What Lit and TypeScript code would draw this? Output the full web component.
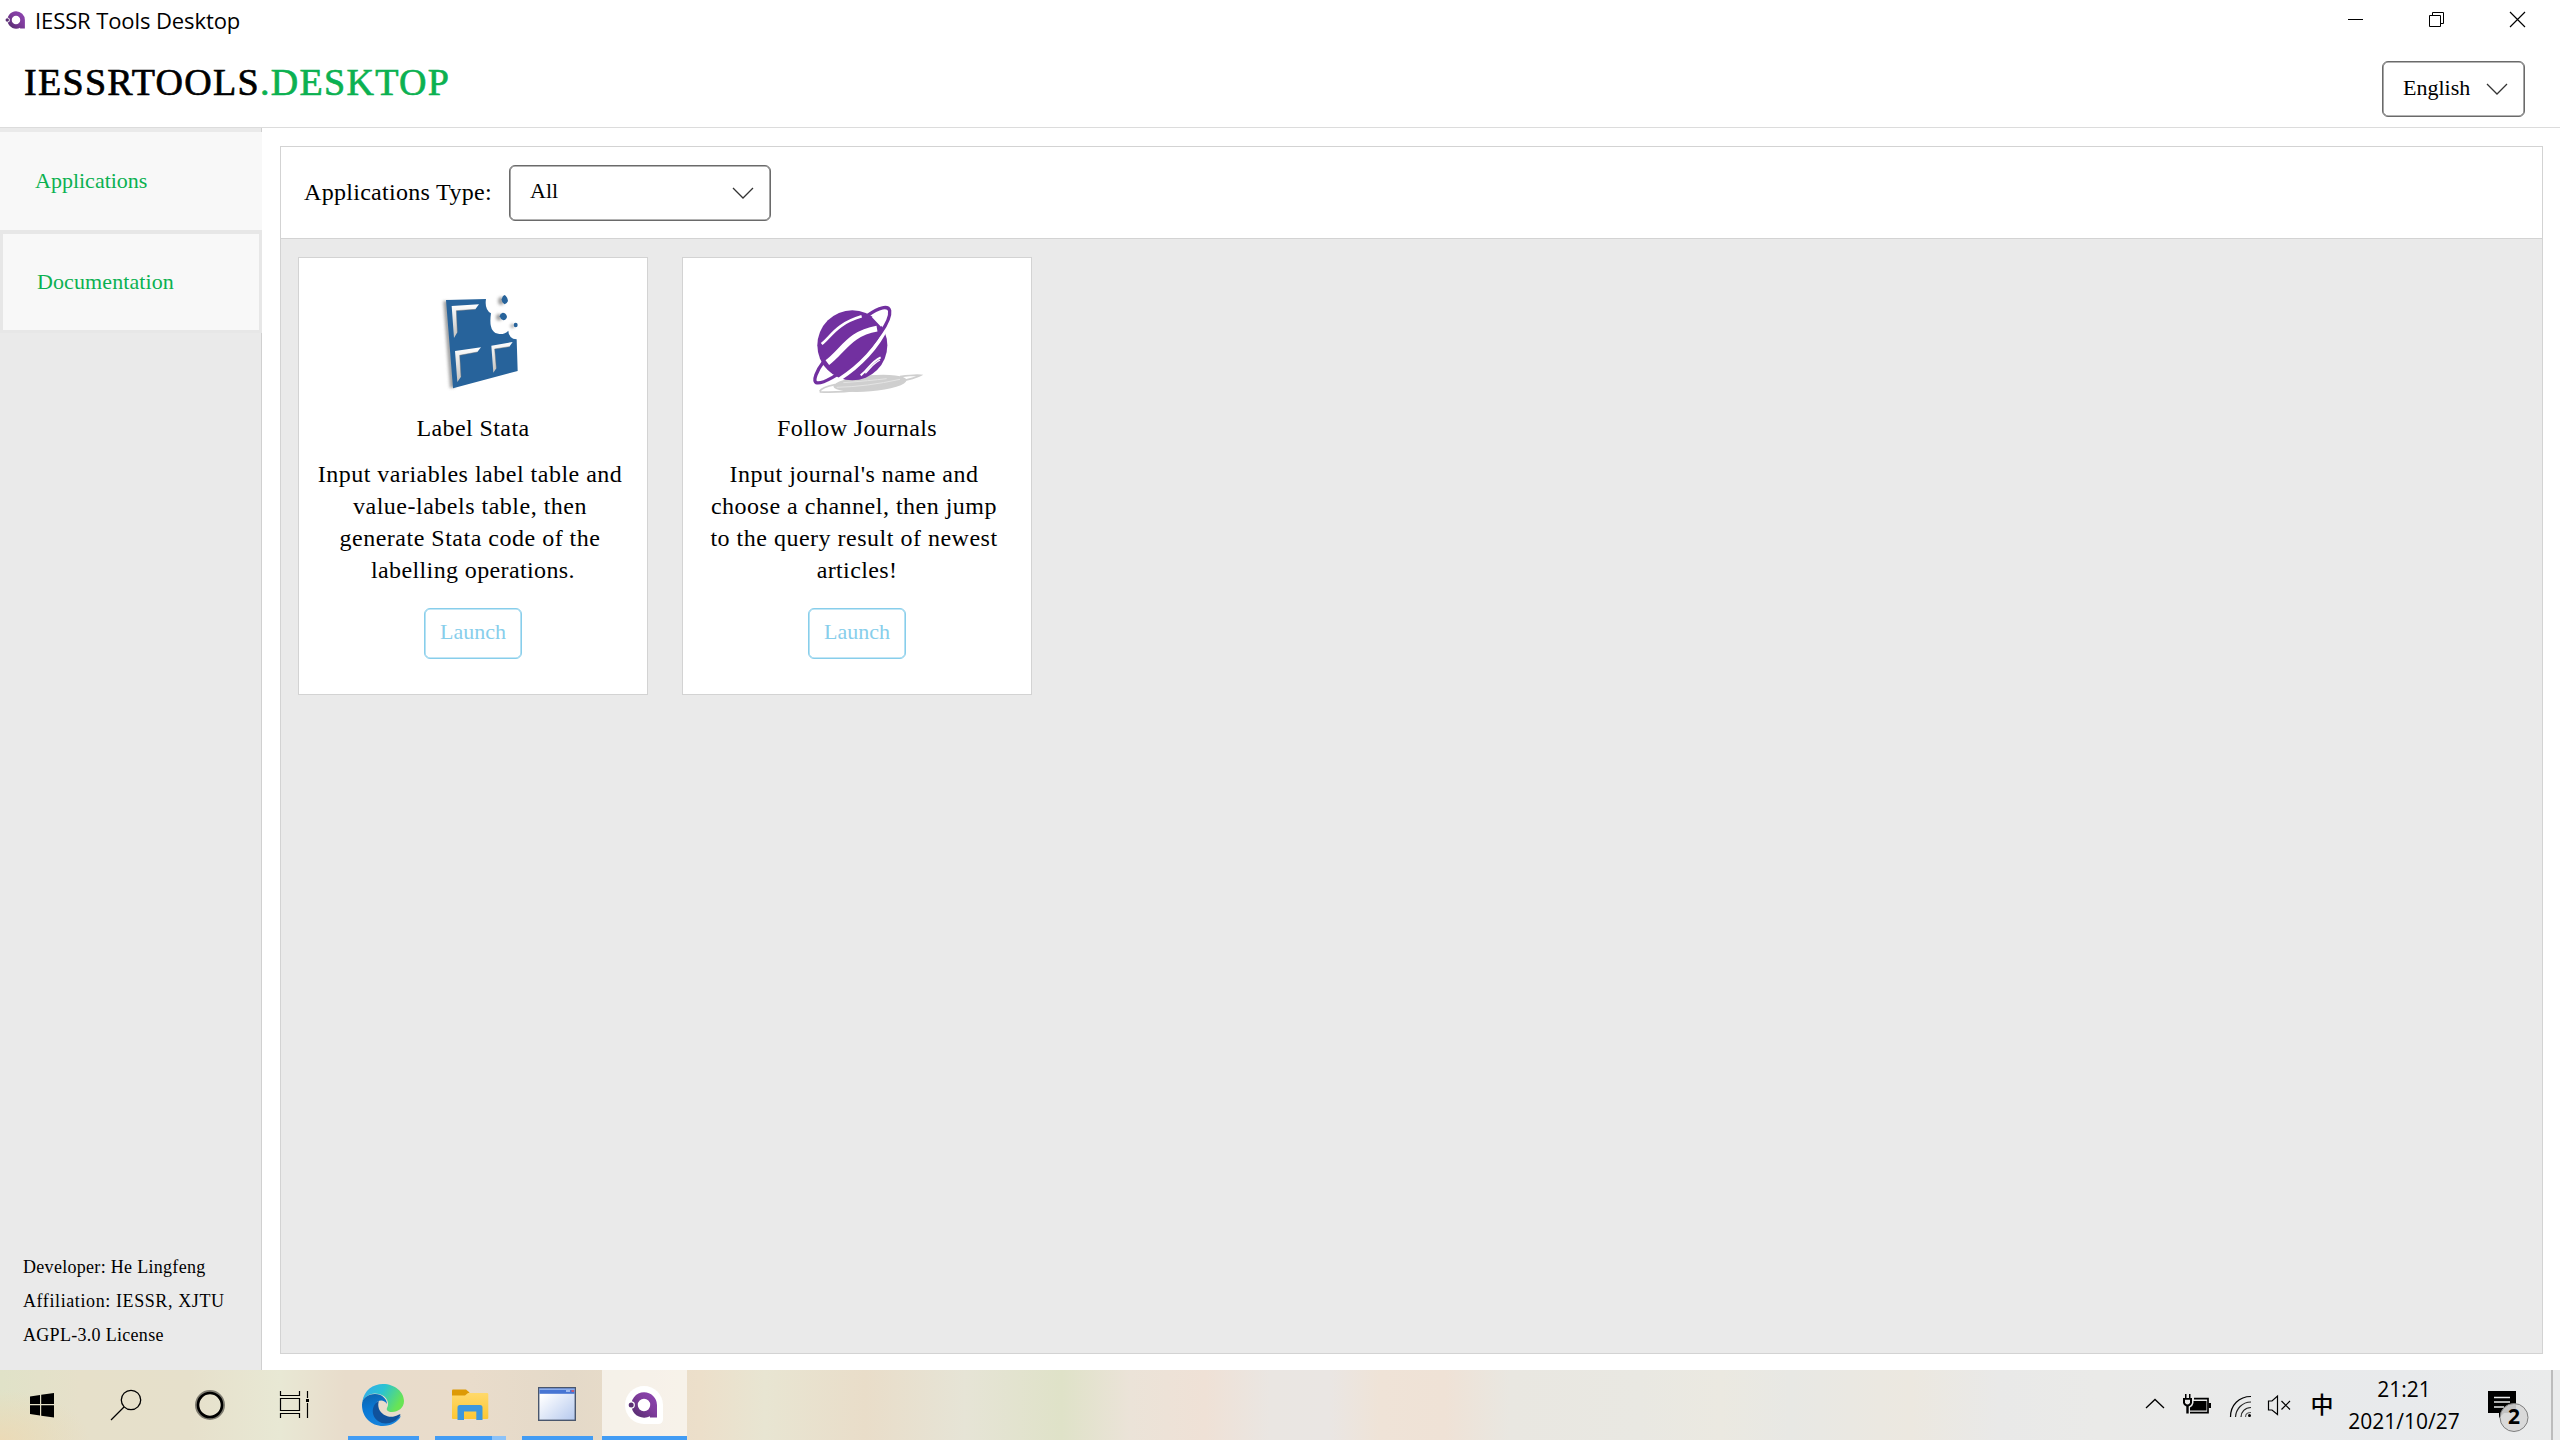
import { LitElement, html, svg, css } from "lit";
import { customElement } from "lit/decorators.js";

const brandMark = svg`
  <defs>
    <linearGradient id="brand" x1="0" y1="1" x2="1" y2="0">
      <stop offset="0" stop-color="#4f2a68" /><stop offset=".55" stop-color="#7f3c9c" /><stop offset="1" stop-color="#8f46b4" />
    </linearGradient>
  </defs>
  <path d="M19 0A19 19 0 1 0 19 38H33Q38 38 38 33V19A19 19 0 0 0 19 0Z" fill="#fff" />
  <path d="M19 6.300A12.700 12.700 0 1 0 25 30.200V31.500H32V19A12.900 12.900 0 0 0 19 6.300ZM19 12.800A6.200 6.200 0 1 1 19 25.200A6.200 6.200 0 1 1 19 12.800Z" fill="url(#brand)" fill-rule="evenodd" />
  <circle cx="6.200" cy="19" r="3.700" fill="#fff" />
  <circle cx="6.200" cy="19" r="2.500" fill="#5b2f74" />
`;

const chocolate = svg`
  <svg class="picture" viewBox="339 120 420 312">
    <defs>
      <filter id="soft" x="-20%" y="-20%" width="140%" height="140%"><feGaussianBlur stdDeviation="4" /></filter>
      <linearGradient id="bevel" x1="0" y1="0" x2="0" y2="1"><stop offset="0" stop-color="#fff" /><stop offset="1" stop-color="#c4c2bf" /></linearGradient>
    </defs>
    <g fill="#8a8a8a" filter="url(#soft)" opacity=".8">
      <path d="M460 153L475 153L495 412L480 415Z" />
      <ellipse cx="633" cy="153" rx="9" ry="12" /><ellipse cx="627" cy="202" rx="9" ry="10" /><ellipse cx="667" cy="228" rx="6" ry="6" />
    </g>
    <path fill="#27639b" d="M468 150L588 147Q583 178 603 190Q594 250 628 252Q645 253 655 242Q656 266 680 268L683 363L489 415Z" />
    <g fill="url(#bevel)">
      <path d="M485 168L567 163L556 178L499 182L502 247L492 264Z" />
      <path d="M495 303L573 292L562 306L509 316L513 380L502 396Z" />
      <path d="M604 287L668 276L658 290L614 297L619 355L610 368Z" />
    </g>
    <g fill="none" stroke="#6e7377" stroke-width="2" opacity=".7">
      <path d="M556 178L499 182L502 247" /><path d="M562 306L509 316L513 380" /><path d="M658 290L614 297L619 355" />
    </g>
    <g fill="#27639b">
      <path d="M643 135Q652 139 654 153Q650 162 644 163Q635 158 635 148Q637 137 643 135Z" />
      <path d="M638 188Q648 188 651 200Q649 210 640 211Q631 207 629 199Q630 190 638 188Z" />
      <ellipse cx="677" cy="225" rx="6" ry="7" />
    </g>
  </svg>
`;

const planet = svg`
  <svg class="picture" viewBox="351 120 420 312">
    <g fill="none" stroke="#cfcfcf">
      <ellipse cx="600" cy="400" rx="110" ry="24" fill="#cfcfcf" stroke="none" transform="rotate(-5 600 400)" />
      <path d="M449 424Q455 412 495 404M449 426Q560 430 650 402Q730 388 752 376Q735 374 690 380" stroke-width="5" />
      <path d="M500 412Q590 410 690 388M520 398Q600 392 650 386" stroke="#e4e4e4" stroke-width="3" />
    </g>
    <circle cx="547" cy="286" r="105" fill="#7230a0" />
    <path d="M606 202C628 186 648 182 648 190C650 204 644 214 633 230ZM462 350C446 374 440 388 448 391C458 393 472 384 487 374Z" fill="#fff" />
    <path d="M650 232C625 290 570 348 508 388" fill="none" stroke="#fff" stroke-width="11" />
    <path d="M592 197C628 170 655 166 659 182C664 212 615 280 560 330C510 374 454 404 439 398C428 392 440 362 460 336" fill="none" stroke="#7230a0" stroke-width="10" stroke-linejoin="round" />
    <g fill="none" stroke="#fff">
      <path d="M455 282C485 258 498 222 575 199" stroke-width="8" />
      <path d="M472 338C520 302 538 250 621 236" stroke-width="18" />
      <path d="M572 376C600 355 600 338 632 322" stroke-width="6" />
      <path d="M586 370C605 350 610 340 630 330" stroke-width="4" />
    </g>
  </svg>
`;

interface Tool {
  title: string;
  lines: string[];
  picture: unknown;
}

const tools: Tool[] = [
  {
    title: "Label Stata",
    lines: ["Input variables label table and", "value-labels table, then", "generate Stata code of the", "labelling operations."],
    picture: chocolate,
  },
  {
    title: "Follow Journals",
    lines: ["Input journal's name and", "choose a channel, then jump", "to the query result of newest", "articles!"],
    picture: planet,
  },
];

@customElement("combo-box")
class ComboBox extends LitElement {
  static styles = css`
    :host {
      display: flex;
      box-sizing: border-box;
      height: 56px;
      padding: 0 16px 0 20px;
      align-items: center;
      justify-content: space-between;
      border: 1px solid #6a6a6a;
      box-shadow: inset 0 0 0 0.6px #6a6a6a;
      border-radius: 6px;
      background: #fff;
      font-size: 22px;
    }
    .label { padding-bottom: 3px; }
    .arrow { width: 22px; height: 14px; }
  `;
  render() {
    return html`<span class="label"><slot></slot></span>
      <svg class="arrow" viewBox="0 0 22 14"><path d="M1 2L11 12L21 2" fill="none" stroke="#333" stroke-width="1.3" /></svg>`;
  }
}

@customElement("title-bar")
class TitleBar extends LitElement {
  static styles = css`
    :host { display: flex; height: 40px; align-items: center; padding: 0 2px 0 3px; box-sizing: border-box; font: 22px "Open Sans", "Noto Sans", sans-serif; }
    .mark { width: 26px; height: 26px; }
    .name { flex: 1; padding: 0 0 1px 6px; letter-spacing: -0.1px; }
    .control { width: 81px; height: 40px; fill: none; stroke: #000; }
  `;
  render() {
    return html`
      <svg class="mark" viewBox="0 0 38 38">${brandMark}</svg>
      <span class="name">IESSR Tools Desktop</span>
      <svg class="control" viewBox="0 0 81 40"><path d="M33 19.500H48" /></svg>
      <svg class="control" viewBox="0 0 81 40"><path d="M33.500 15.500H44.500V26.500H33.500ZM36.500 15V12.500H47.500V23.500H45" /></svg>
      <svg class="control" viewBox="0 0 81 40"><path d="M33 12L48 27M48 12L33 27" stroke-width="1.2" /></svg>
    `;
  }
}

@customElement("tool-card")
class ToolCard extends LitElement {
  static properties = { tool: { attribute: false } };
  declare tool: Tool;
  static styles = css`
    :host {
      display: flex; flex-direction: column; align-items: center;
      box-sizing: border-box; width: 350px; height: 438px; padding-top: 32px;
      background: #fff; border: 1px solid #d3d3d3; font-size: 24px; line-height: 32px;
    }
    .picture { display: block; width: 140px; height: 104px; }
    .title { margin-top: 18px; letter-spacing: 0.4px; }
    .text { margin-top: 14px; text-align: center; letter-spacing: 0.5px; white-space: nowrap; }
    .line { display: block; padding-right: 6px; }
    .line:last-child { padding-right: 0; letter-spacing: 0.38px; }
    .launch {
      display: flex; align-items: center; justify-content: center; box-sizing: border-box;
      width: 98px; height: 51px; margin-top: 22px; padding: 0 0 4px;
      border: 1px solid #87ceeb; border-radius: 6px; background: #fff; color: #87ceeb;
      font: 22px "Liberation Serif", serif; box-shadow: inset 0 0 0 0.6px #87ceeb;
    }
  `;
  render() {
    return html`
      ${this.tool.picture}
      <div class="title">${this.tool.title}</div>
      <div class="text">${this.tool.lines.map((l) => html`<span class="line">${l}</span>`)}</div>
      <button class="launch">Launch</button>
    `;
  }
}

@customElement("task-bar")
class TaskBar extends LitElement {
  static styles = css`
    :host {
      display: flex; height: 70px; justify-content: space-between;
      font: 21px "Open Sans", "Noto Sans", sans-serif;
      background:
        radial-gradient(ellipse 90px 50px at 0 100%, rgba(238, 216, 178, 0.8), transparent),
        linear-gradient(90deg, #e0e2c8 0, #e6e0ca 80px, #e6e0cb 190px, #e8e8d4 280px, #e8dccb 345px, #e9dccb 470px, #e4d9c8 570px, #ecdfca 700px, #e8e5d2 765px, #e9ddc9 865px, #e6e4d6 965px, #dfe2c8 1062px, #ebe3d8 1130px, #efe1d6 1205px, #eae6e2 1270px, #eae6e3 1330px, #efe3d7 1380px, #efe2d6 1445px, #e9e7e1 1510px, #e9e8e2 1640px, #ebe9e1 1720px, #e8e8e4 1790px, #ece8e0 1910px, #e9e9e8 2000px, #eaeae8 2100px, #e8eaec 2400px, #eaebeb 2560px);
    }
    .group { display: flex; }
    .pinned { width: 84px; height: 70px; }
    .running { display: flex; gap: 2px; padding-left: 5px; }
    .app { width: 85px; height: 70px; }
    .active { background: rgba(255, 255, 255, 0.6); }
    .cell { height: 70px; }
    .more { width: 40px; }
    .battery { width: 43px; }
    .wifi { width: 44px; }
    .sound { width: 38px; }
    .ime { width: 44px; line-height: 67px; text-align: center; font-family: "Noto Sans CJK SC", sans-serif; font-size: 23px; font-weight: 500; }
    .clock { width: 120px; padding-top: 3px; box-sizing: border-box; text-align: center; line-height: 32px; }
    .notice { width: 87px; }
    .badge { font-size: 21px; font-weight: 700; }
    .peek { width: 9px; box-sizing: border-box; border-left: 2px solid #bcbcbc; }
  `;
  render() {
    return html`
      <div class="group">
        <svg class="pinned" viewBox="0 0 84 70"><path d="M30 26.500L40 25V34H30ZM41.200 24.800L54 23V34H41.200ZM30 35.200H40V45.500L30 44ZM41.200 35.200H54V47.500L41.200 45.700Z" /></svg>
        <svg class="pinned" viewBox="0 0 84 70" fill="none" stroke="#000" stroke-width="1.3"><circle cx="47" cy="30" r="9.700" /><path d="M40 37L27 50" /></svg>
        <svg class="pinned" viewBox="0 0 84 70" fill="none" stroke="#000"><circle cx="42" cy="35" r="13" stroke-width="4" opacity=".45" /><circle cx="42" cy="35" r="12" stroke-width="2.600" /></svg>
        <svg class="pinned" viewBox="0 0 84 70" fill="none" stroke="#000" stroke-width="1.2"><path d="M28.500 21V25.500H47.500V21M28.500 28.500H47.500V40.500H28.500ZM28.500 48V43.500H47.500V48M55.500 21V28M55.500 33V48" /><rect x="54" y="29" width="3" height="3" fill="#000" stroke="none" /></svg>
        <div class="running">
          <svg class="app" viewBox="0 0 85 70">
            <defs>
              <linearGradient id="e1" x1="0" y1="0" x2="1" y2=".4"><stop offset="0" stop-color="#35a7f0" /><stop offset=".5" stop-color="#2bc3d2" /><stop offset="1" stop-color="#68e455" /></linearGradient>
              <linearGradient id="e2" x1="0" y1="0" x2=".3" y2="1"><stop offset="0" stop-color="#0d62ab" /><stop offset=".5" stop-color="#0a78d4" /><stop offset="1" stop-color="#1683dc" /></linearGradient>
            </defs>
            <path d="M21.300 32C23 20 32 14 42 14C54 14 63 22 63 31C63 38 57 42 51 42C47 42 45 40 46 38C49 33 46 26 38 24C30 22 24 26 21.300 32Z" fill="url(#e1)" />
            <path d="M21 35C21 28 27 24 34 24C41 24 46 29 46 34C43 29 36 29 34 36C32 45 40 52 49 51C55 50 58 47 60 46C57 52 50 56 42 56C30 56 21 47 21 35Z" fill="url(#e2)" />
            <path d="M38 31C31 34 29 45 37 51C44 56 54 53 59 46C60 44 59 44 57 45C50 49 41 46 38 39C37 36 37 33 38 31Z" fill="#10529c" />
            <rect x="7" y="66" width="71" height="4" fill="#429cf4" />
          </svg>
          <svg class="app" viewBox="0 0 85 70">
            <defs><linearGradient id="fold" x1="0" y1="0" x2="0" y2="1"><stop offset="0" stop-color="#ffd96b" /><stop offset="1" stop-color="#fdc733" /></linearGradient></defs>
            <path d="M24 20.500Q24 19.500 25 19.500H38L41.500 22.500L39 26H24Z" fill="#dd9a05" />
            <path d="M24 25.500H37L40 23H59Q60.300 23 60.300 24V48Q60.300 49 59 49H25Q24 49 24 48Z" fill="url(#fold)" />
            <path d="M29.500 50V37.500Q29.500 35 32 35H52Q54.500 35 54.500 37.500V50H48.300V41.500H36V50Z" fill="#3d97dd" />
            <rect x="7" y="66" width="57" height="4" fill="#429cf4" /><rect x="64" y="66" width="14" height="4" fill="#8cc2f8" />
          </svg>
          <svg class="app" viewBox="0 0 85 70">
            <defs><linearGradient id="pane" x1="0" y1="0" x2="1" y2="1"><stop offset=".15" stop-color="#fff" /><stop offset="1" stop-color="#b4c8ee" /></linearGradient></defs>
            <rect x="23.700" y="17.700" width="36.600" height="32.600" fill="url(#pane)" stroke="#49566c" stroke-width="1.400" />
            <rect x="24.400" y="18.400" width="35.200" height="5.400" fill="#4775d3" /><path d="M24.400 19.500H59.600" stroke="#8daee9" />
            <path d="M51 21H55" stroke="#9db9ee" stroke-width="2" /><path d="M56.500 21H59" stroke="#c55a73" stroke-width="2" />
            <rect x="7" y="66" width="71" height="4" fill="#429cf4" />
          </svg>
          <svg class="app active" viewBox="0 0 85 70"><g transform="translate(23 16)">${brandMark}</g><rect y="66" width="85" height="4" fill="#429cf4" /></svg>
        </div>
      </div>
      <div class="group">
        <svg class="cell more" viewBox="0 0 40 70"><path d="M11 38L20 29.500L29 38" fill="none" stroke="#000" stroke-width="1.300" /></svg>
        <svg class="cell battery" viewBox="0 0 43 70"><path d="M8 28H17V33Q16.500 35.500 13.700 36.500V43.500H11.300V36.500Q8.500 35.500 8 33ZM10 24H11.500V28H10ZM14 24H15.500V28H14Z" /><path d="M10 29.700H15V32.500Q14.500 34.500 12.500 34.500Q10.500 34.500 10 32.500Z" fill="#e9e9e8" /><path d="M19 28.700H33V42.700H15" fill="none" stroke="#000" stroke-width="1.700" /><path d="M18.500 31H31.500V40.500H15V37.500Q18 36 18.500 33ZM33.500 33H36V38H33.500Z" /></svg>
        <svg class="cell wifi" viewBox="0 0 44 70" fill="none" stroke="#000" stroke-width="1.200"><path d="M12.500 47C12.500 35 21 26.500 33 26.500" /><path d="M17.500 47C18 39 24 32 33 32" opacity=".85" /><path d="M23 47C23 42 27 37.500 33 37.500" opacity=".85" /><path d="M27.500 47C27.500 44.500 29.500 42.500 33 42.500" opacity=".6" /><circle cx="31.500" cy="45.500" r="1.500" fill="#000" stroke="none" /></svg>
        <svg class="cell sound" viewBox="0 0 38 70" fill="none" stroke="#000" stroke-width="1.200"><path d="M6.500 31H10L15.500 26V44.500L10 40H6.500Z" /><path d="M19.500 31L28 39.500M28 31L19.500 39.500" /></svg>
        <div class="cell ime">中</div>
        <div class="cell clock"><div>21:21</div><div>2021/10/27</div></div>
        <svg class="cell notice" viewBox="0 0 87 70">
          <path d="M24 21H52V43H40L35 48V43H24Z" /><path d="M30 27.500H46M30 32H46M30 37H40" stroke="#e9eaea" stroke-width="1.300" />
          <circle cx="50" cy="47.500" r="14" fill="#d7d7d7" fill-opacity=".9" stroke="#7e7e7e" />
          <text class="badge" x="50" y="53.500" text-anchor="middle">2</text>
        </svg>
        <div class="peek"></div>
      </div>
    `;
  }
}

@customElement("app-root")
class AppRoot extends LitElement {
  static styles = css`
    :host { display: flex; flex-direction: column; width: 2560px; height: 1440px; background: #fff; color: #000; font-family: "Liberation Serif", serif; overflow: hidden; }
    .header { display: flex; box-sizing: border-box; height: 88px; justify-content: space-between; padding: 21px 35px 0 24px; border-bottom: 1px solid #dcdcdc; }
    .logo { font-size: 38px; line-height: 42px; letter-spacing: 1.3px; -webkit-text-stroke: 0.7px currentColor; }
    .accent { color: #0bb151; -webkit-text-stroke-color: #0bb151; }
    .language { width: 143px; }
    .body { display: flex; flex: 1; min-height: 0; }
    .sidebar { display: flex; flex-direction: column; box-sizing: border-box; width: 262px; padding-top: 4px; background: #eaeaea; box-shadow: inset -1px 0 #d0d0d0; color: #0bb151; font-size: 22px; }
    .tab { display: flex; align-items: center; box-sizing: border-box; background: #f8f8f8; }
    .current { height: 98px; padding-left: 35px; }
    .other { height: 103px; padding-left: 34px; letter-spacing: 0.1px; border: solid #e7e7e7; border-width: 4px 3px 3px; }
    .credits { margin-top: auto; padding: 0 0 18px 23px; color: #000; font-size: 18px; line-height: 34px; letter-spacing: 0.3px; }
    .affiliation { letter-spacing: 0.6px; }
    .content { display: flex; flex: 1; padding: 18px 17px 16px 18px; }
    .panel { display: flex; flex: 1; flex-direction: column; border: 1px solid #d3d3d3; background: #eaeaea; }
    .toolbar { display: flex; align-items: center; box-sizing: border-box; height: 92px; padding-left: 23px; gap: 18px; background: #fff; border-bottom: 1px solid #d3d3d3; font-size: 24px; }
    .caption { width: 187px; white-space: nowrap; letter-spacing: 0.3px; }
    .type { width: 262px; }
    .cards { display: flex; gap: 34px; padding: 18px 17px; }
  `;
  render() {
    return html`
      <title-bar></title-bar>
      <div class="header">
        <div class="logo">IESSRTOOLS<span class="accent">.DESKTOP</span></div>
        <combo-box class="language">English</combo-box>
      </div>
      <div class="body">
        <div class="sidebar">
          <div class="tab current">Applications</div>
          <div class="tab other">Documentation</div>
          <div class="credits">
            <div>Developer: He Lingfeng</div>
            <div class="affiliation">Affiliation: IESSR, XJTU</div>
            <div>AGPL-3.0 License</div>
          </div>
        </div>
        <div class="content">
          <div class="panel">
            <div class="toolbar">
              <span class="caption">Applications Type:</span>
              <combo-box class="type">All</combo-box>
            </div>
            <div class="cards">${tools.map((t) => html`<tool-card .tool=${t}></tool-card>`)}</div>
          </div>
        </div>
      </div>
      <task-bar></task-bar>
    `;
  }
}
